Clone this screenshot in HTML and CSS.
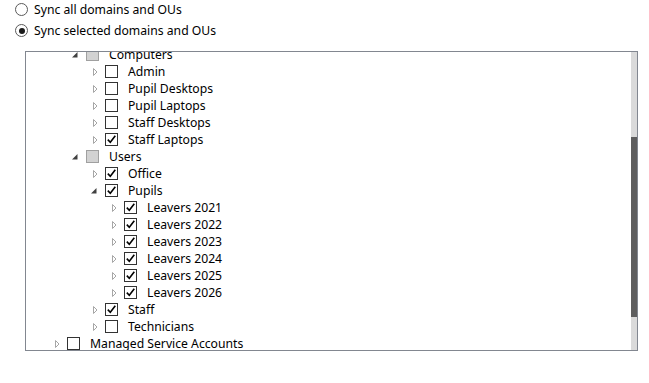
FILE: index.html
```html
<!DOCTYPE html>
<html lang="en">

<head>
    <meta charset="UTF-8">
    <title>Sync scope</title>
    <link rel="stylesheet" href="styles.css">
</head>

<body>
    <div class="options">
        <label class="radio-row"><span class="radio"></span>Sync all domains and OUs</label>
        <label class="radio-row"><span class="radio on"></span>Sync selected domains and OUs</label>
    </div>

    <div class="box">
        <div class="tree">
            <div class="row lvl1"><span class="exp open"></span><span class="cb part"></span><span class="txt">Computers</span></div>
            <div class="row lvl2"><span class="exp"></span><span class="cb"></span><span class="txt">Admin</span></div>
            <div class="row lvl2"><span class="exp"></span><span class="cb"></span><span class="txt">Pupil Desktops</span></div>
            <div class="row lvl2"><span class="exp"></span><span class="cb"></span><span class="txt">Pupil Laptops</span></div>
            <div class="row lvl2"><span class="exp"></span><span class="cb"></span><span class="txt">Staff Desktops</span></div>
            <div class="row lvl2"><span class="exp"></span><span class="cb on"></span><span class="txt">Staff Laptops</span></div>
            <div class="row lvl1"><span class="exp open"></span><span class="cb part"></span><span class="txt">Users</span></div>
            <div class="row lvl2"><span class="exp"></span><span class="cb on"></span><span class="txt">Office</span></div>
            <div class="row lvl2"><span class="exp open"></span><span class="cb on"></span><span class="txt">Pupils</span></div>
            <div class="row lvl3"><span class="exp"></span><span class="cb on"></span><span class="txt">Leavers 2021</span></div>
            <div class="row lvl3"><span class="exp"></span><span class="cb on"></span><span class="txt">Leavers 2022</span></div>
            <div class="row lvl3"><span class="exp"></span><span class="cb on"></span><span class="txt">Leavers 2023</span></div>
            <div class="row lvl3"><span class="exp"></span><span class="cb on"></span><span class="txt">Leavers 2024</span></div>
            <div class="row lvl3"><span class="exp"></span><span class="cb on"></span><span class="txt">Leavers 2025</span></div>
            <div class="row lvl3"><span class="exp"></span><span class="cb on"></span><span class="txt">Leavers 2026</span></div>
            <div class="row lvl2"><span class="exp"></span><span class="cb on"></span><span class="txt">Staff</span></div>
            <div class="row lvl2"><span class="exp"></span><span class="cb"></span><span class="txt">Technicians</span></div>
            <div class="row lvl0"><span class="exp"></span><span class="cb"></span><span class="txt">Managed Service Accounts</span></div>
        </div>
        <div class="scrollbar">
            <div class="thumb"></div>
        </div>
    </div>
</body>

</html>
```

FILE: styles.css
```css
* {
    padding: 0;
    margin: 0;
    box-sizing: border-box;
}

body {
    background-color: #fff;
    color: #000;
    font-family: "Noto Sans", "Open Sans", sans-serif;
    font-size: 12.2px;
}

.options {
    display: flex;
    flex-direction: column;
    gap: 2px;
    padding-left: 15px;
}

.radio-row {
    height: 19px;
    display: flex;
    align-items: center;
}

.radio {
    width: 13px;
    height: 13px;
    border: 1px solid #5a5a5a;
    border-radius: 50%;
    margin-right: 6px;
    display: flex;
    align-items: center;
    justify-content: center;
}

.radio.on::after {
    content: "";
    width: 6px;
    height: 6px;
    border-radius: 50%;
    background-color: #1a1a1a;
}

.box {
    margin: 11px 0 0 25px;
    width: 613px;
    height: 300px;
    border: 1px solid #828790;
    display: flex;
}

.tree {
    flex: 1;
    overflow: hidden;
}

.tree .row:first-child {
    margin-top: -6px;
}

.row {
    height: 17px;
    display: flex;
    align-items: center;
    white-space: nowrap;
}

.lvl0 { padding-left: 25px; }
.lvl1 { padding-left: 44px; }
.lvl2 { padding-left: 63px; }
.lvl3 { padding-left: 82px; }

.exp {
    width: 12px;
    height: 12px;
    margin-right: 4px;
    background: url("data:image/svg+xml,%3Csvg xmlns='http://www.w3.org/2000/svg' width='12' height='12'%3E%3Cpolygon points='4.5,2.5 8,6 4.5,9.5' fill='white' stroke='%23a6a6a6'/%3E%3C/svg%3E") no-repeat;
}

.exp.open {
    background: url("data:image/svg+xml,%3Csvg xmlns='http://www.w3.org/2000/svg' width='12' height='12'%3E%3Cpolygon points='7.5,3 7.5,8.5 2,8.5' fill='%23404040'/%3E%3C/svg%3E") no-repeat;
}

.cb {
    width: 13px;
    height: 13px;
    border: 1px solid #333;
    background-color: #fff;
    margin-right: 10px;
}

.cb.on {
    background: #fff url("data:image/svg+xml,%3Csvg xmlns='http://www.w3.org/2000/svg' width='11' height='11'%3E%3Cpath d='M1.8 5.6 L4.3 8.2 L9.3 1.8' fill='none' stroke='%23000' stroke-width='1.6'/%3E%3C/svg%3E") no-repeat;
}

.cb.part {
    border-color: #a0a0a0;
    background-color: #d2d2d2;
}

.scrollbar {
    width: 6px;
    background-color: #dadada;
    padding-top: 85px;
}

.thumb {
    height: 180px;
    background-color: #5e5e5e;
}
```
